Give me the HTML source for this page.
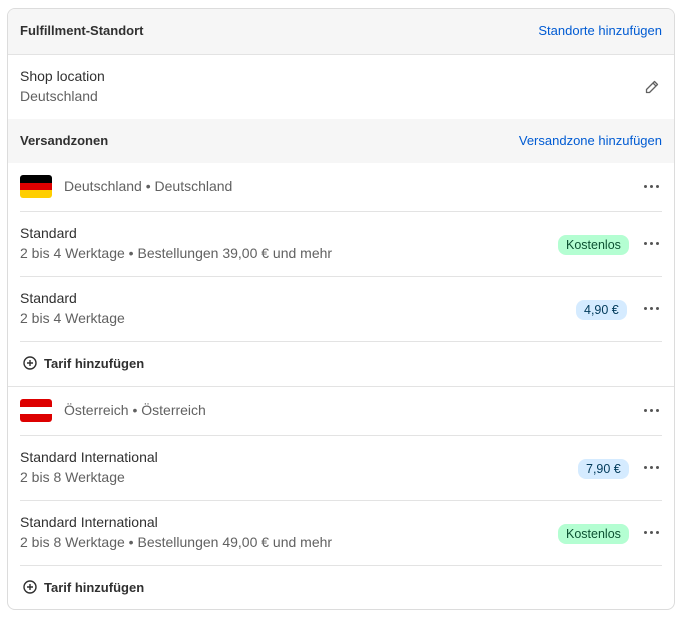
<!DOCTYPE html><html><head><meta charset="utf-8"><style>
body{margin:0;width:679px;height:617px;background:#fff;font-family:"Liberation Sans",Arial,sans-serif;font-size:13px;color:#303030;position:relative;overflow:hidden}
.card{position:absolute;left:7px;top:8px;width:666px;height:600px;border:1px solid #dcdcdc;border-radius:8px;overflow:hidden;background:#fff}
.a{position:absolute;white-space:nowrap}
.t{font-size:14px}
.g{background:#f6f6f6}
.sub{color:#616161}
.link{color:#005bd3}
.b{font-weight:bold;color:#303030}
.hl{position:absolute;left:12px;right:12px;height:1px;background:#e3e3e3}
.dots{position:absolute;width:16px;height:4px}
.dots i{position:absolute;top:0;width:3px;height:3px;border-radius:50%;background:#555}
.badge{position:absolute;height:20px;line-height:20px;border-radius:8px;padding:0 8px;font-size:12.5px}
.green{background:#b4fed2;color:#0c5132}
.blue{background:#d5ebff;color:#003a5a}
</style></head><body><div class="card">
<div class="a g" style="left:0;top:0;width:666px;height:45px;border-bottom:1px solid #e3e3e3"></div>
<div class="a b" style="left:12px;top:14px">Fulfillment-Standort</div>
<div class="a link" style="right:12px;top:14px">Standorte hinzufügen</div>
<div class="a t" style="left:12px;top:59px">Shop location</div>
<div class="a sub t" style="left:12px;top:79px">Deutschland</div>
<svg class="a" style="left:636px;top:70px" width="16" height="16" viewBox="0 0 16 16"><path d="M10.5 2.5l3 3-8 8H2.5v-3z M9 4l3 3" fill="none" stroke="#616161" stroke-width="1.3" stroke-linejoin="round"/></svg>
<div class="a g" style="left:0;top:110px;width:666px;height:44px"></div>
<div class="a b" style="left:12px;top:124px">Versandzonen</div>
<div class="a link" style="right:12px;top:124px">Versandzone hinzufügen</div>

<div class="a" style="left:12px;top:166px;width:32px;height:23px;border-radius:3px;overflow:hidden"><div style="height:8px;background:#000"></div><div style="height:7px;background:#dd0000"></div><div style="height:8px;background:#ffce00"></div></div>
<div class="a sub t" style="left:56px;top:169px">Deutschland • Deutschland</div>
<div class="dots" style="left:636px;top:176px"><i style="left:0"></i><i style="left:6px"></i><i style="left:12px"></i></div>
<div class="hl" style="top:202px"></div>
<div class="a t" style="left:12px;top:216px">Standard</div>
<div class="a sub t" style="left:12px;top:236px">2 bis 4 Werktage • Bestellungen 39,00 € und mehr</div>
<div class="badge green" style="left:550px;top:226px">Kostenlos</div>
<div class="dots" style="left:636px;top:233px"><i style="left:0"></i><i style="left:6px"></i><i style="left:12px"></i></div>
<div class="hl" style="top:267px"></div>
<div class="a t" style="left:12px;top:281px">Standard</div>
<div class="a sub t" style="left:12px;top:301px">2 bis 4 Werktage</div>
<div class="badge blue" style="left:568px;top:291px">4,90 €</div>
<div class="dots" style="left:636px;top:298px"><i style="left:0"></i><i style="left:6px"></i><i style="left:12px"></i></div>
<div class="hl" style="top:332px"></div>
<svg class="a" style="left:15px;top:347px" width="14" height="14" viewBox="0 0 14 14"><circle cx="7" cy="7" r="6" fill="none" stroke="#303030" stroke-width="1.4"/><path d="M7 4v6M4 7h6" stroke="#303030" stroke-width="1.4"/></svg>
<div class="a b" style="left:36px;top:347px">Tarif hinzufügen</div>
<div class="a" style="left:0;top:377px;width:666px;height:1px;background:#e3e3e3"></div>

<div class="a" style="left:12px;top:390px;width:32px;height:23px;border-radius:3px;overflow:hidden"><div style="height:8px;background:#dd0000"></div><div style="height:7px;background:#fff"></div><div style="height:8px;background:#dd0000"></div></div>
<div class="a sub t" style="left:56px;top:393px">Österreich • Österreich</div>
<div class="dots" style="left:636px;top:400px"><i style="left:0"></i><i style="left:6px"></i><i style="left:12px"></i></div>
<div class="hl" style="top:426px"></div>
<div class="a t" style="left:12px;top:440px">Standard International</div>
<div class="a sub t" style="left:12px;top:460px">2 bis 8 Werktage</div>
<div class="badge blue" style="left:570px;top:450px">7,90 €</div>
<div class="dots" style="left:636px;top:457px"><i style="left:0"></i><i style="left:6px"></i><i style="left:12px"></i></div>
<div class="hl" style="top:491px"></div>
<div class="a t" style="left:12px;top:505px">Standard International</div>
<div class="a sub t" style="left:12px;top:525px">2 bis 8 Werktage • Bestellungen 49,00 € und mehr</div>
<div class="badge green" style="left:550px;top:515px">Kostenlos</div>
<div class="dots" style="left:636px;top:522px"><i style="left:0"></i><i style="left:6px"></i><i style="left:12px"></i></div>
<div class="hl" style="top:556px"></div>
<svg class="a" style="left:15px;top:571px" width="14" height="14" viewBox="0 0 14 14"><circle cx="7" cy="7" r="6" fill="none" stroke="#303030" stroke-width="1.4"/><path d="M7 4v6M4 7h6" stroke="#303030" stroke-width="1.4"/></svg>
<div class="a b" style="left:36px;top:571px">Tarif hinzufügen</div>
</div></body></html>
